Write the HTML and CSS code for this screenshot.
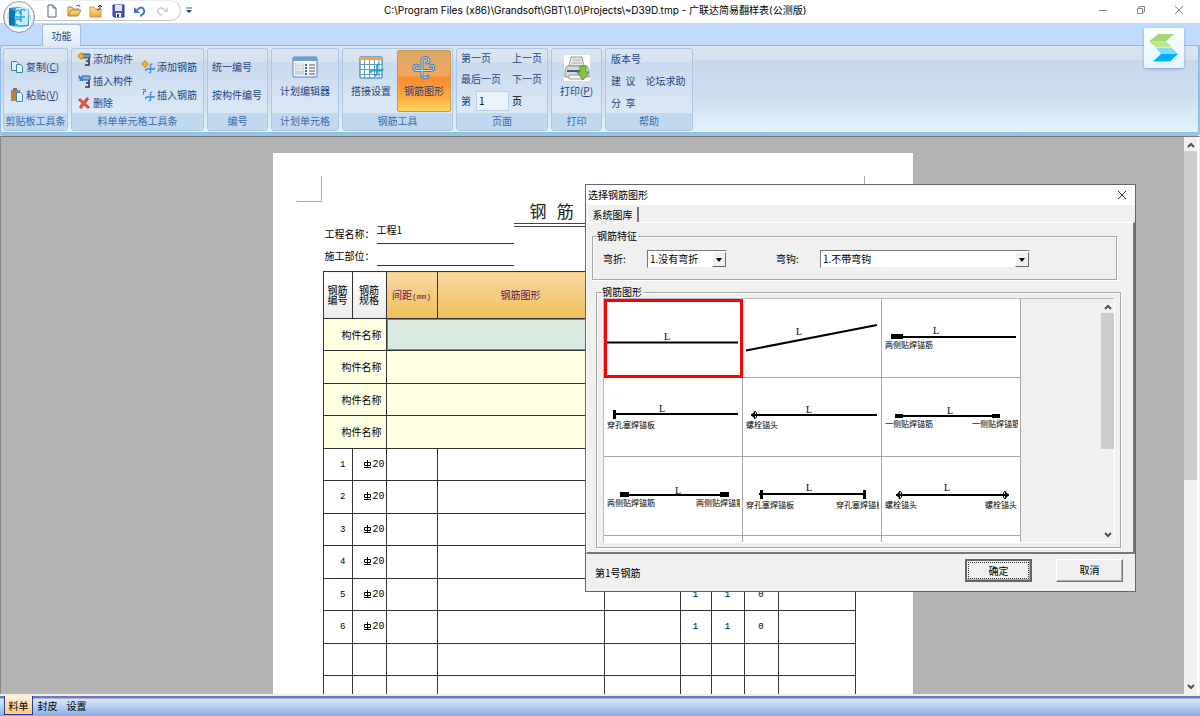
FILE: index.html
```html
<!DOCTYPE html>
<html lang="zh-CN">
<head>
<meta charset="utf-8">
<title>广联达简易翻样表(公测版)</title>
<link rel="stylesheet" href="styles.css">
</head>
<body>
<svg class="defs" width="0" height="0" aria-hidden="true">
  <defs>
    <linearGradient id="orb" x1="0" y1="0" x2="0" y2="1"><stop offset="0" stop-color="#fdfdfe"/><stop offset=".5" stop-color="#cdd6e2"/><stop offset="1" stop-color="#e9eff7"/></linearGradient>
    <linearGradient id="cyan" x1="0" y1="0" x2="1" y2="1"><stop offset="0" stop-color="#0b7fb8"/><stop offset=".5" stop-color="#7fe0f5"/><stop offset="1" stop-color="#1a8dc6"/></linearGradient>
    <linearGradient id="fold" x1="0" y1="0" x2="0" y2="1"><stop offset="0" stop-color="#fbe29a"/><stop offset="1" stop-color="#e3a93a"/></linearGradient>
    <symbol id="rebar" viewBox="0 0 24 24"><path d="M4 13H20a3 3 0 0 0 2-3M12 21V6a4 4 0 0 1 4-4M4 13a2 2 0 0 0-1 4M12 21h-4" fill="none" stroke="currentColor" stroke-width="3"/></symbol>
    <symbol id="steel" viewBox="0 0 8 8"><path d="M3.500 0v8M.5 2.500h6v3h-6zM0 7.500h7" fill="none" stroke="#000"/></symbol>
    <symbol id="plus" viewBox="0 0 8 8"><path d="M3 1h2v2h2v2H5v2H3V5H1V3h2z" fill="#ffc21c" stroke="#d98a10"/></symbol>
    <symbol id="up" viewBox="0 0 8 6"><path d="M1 5l3-3 3 3" fill="none" stroke="#505050" stroke-width="2"/></symbol>
    <symbol id="down" viewBox="0 0 8 6"><path d="M1 1l3 3 3-3" fill="none" stroke="#505050" stroke-width="2"/></symbol>
    <symbol id="bolt" viewBox="0 0 6 8"><path d="M0 4l3-3v6z"/><path d="M3.500 0v8M3 .5h1.500l1 1.500v4l-1 1.500H3" fill="none" stroke="#000"/></symbol>
  </defs>
</svg>

<header class="titlebar">
  <button class="orb" aria-label="应用程序菜单">
    <svg width="34" height="34" viewBox="0 0 34 34"><circle cx="17" cy="17" r="15.500" fill="url(#orb)" stroke="#8e9bab"/><circle cx="17" cy="17" r="13" fill="none" stroke="#fff" stroke-width="2"/><path d="M7 8l9-1 11 2v17l-9 1-11-1z" fill="url(#cyan)"/><path d="M14 8h9l3 3v14H13z" fill="#e7fbff" opacity=".75"/><path d="M7 9l6 2v15l-6-1z" fill="#0878b0"/><path d="M14 13a2 2 0 1 1 3 1M19 22V12a2 2 0 0 1 4-1M12 17h11M16 25a3 3 0 1 1 3-3" fill="none" stroke="#2aa9de" stroke-width="1.500"/></svg>
  </button>
  <div class="quick">
    <button aria-label="新建"><svg width="14" height="14" viewBox="0 0 14 14"><path d="M3 1h5l3 3v9H3z" fill="#fff" stroke="#51648c"/><path d="M8 1v3h3" fill="#ccd8ee" stroke="#51648c"/></svg></button>
    <button aria-label="打开"><svg width="14" height="14" viewBox="0 0 14 14"><path d="M1 12V3h4l1 2h6v2" fill="#f7d98a" stroke="#b8862f"/><path d="M1 12l3-6h10l-3 6z" fill="url(#fold)" stroke="#b8862f"/><path d="M9 2l3-1 1 2" fill="none" stroke="#3c65b4"/></svg></button>
    <button aria-label="关闭"><svg width="14" height="14" viewBox="0 0 14 14"><path d="M1 13V3h4l1 2h6v8z" fill="url(#fold)" stroke="#c79a45"/><path d="M8 6q4 0 3-4M9 3l2-2 2 2" fill="none" stroke="#333"/></svg></button>
    <button aria-label="保存"><svg width="14" height="14" viewBox="0 0 14 14"><path d="M2 1h11v12H3l-1-1z" fill="#4b55c4" stroke="#2d348c"/><path d="M4 1h7v6H4z" fill="#dfe6fb"/><path d="M5 9h5v4H5z" fill="#fff"/><path d="M6 10h2v3H6z" fill="#2d348c"/></svg></button>
    <button aria-label="撤销"><svg width="14" height="14" viewBox="0 0 14 14"><path d="M4 6q5-5 7 0 1 4-4 6" fill="none" stroke="#3d74cf" stroke-width="2"/><path d="M1 3v6h6z" fill="#3d74cf"/></svg></button>
    <button aria-label="恢复"><svg width="14" height="14" viewBox="0 0 14 14"><path d="M10 6q-5-4-7 0-1 4 4 5" fill="none" stroke="#d3d5d8" stroke-width="2"/><path d="M13 3v5H8z" fill="#d3d5d8"/></svg></button>
  </div>
  <button class="more" aria-label="自定义快速访问工具栏"><svg width="6" height="8" viewBox="0 0 6 8"><path d="M0 1h6" stroke="#3a5a92"/><path d="M0 3h6L3 6z" fill="#1f3f78"/></svg></button>
  <h1 class="caption">C:\Program Files (x86)\Grandsoft\GBT\1.0\Projects\~D39D.tmp - 广联达简易翻样表(公测版)</h1>
  <div class="winctl">
    <button aria-label="最小化"><svg width="10" height="10" viewBox="0 0 10 10"><path d="M1 5.500h8" stroke="#888"/></svg></button>
    <button aria-label="还原"><svg width="10" height="10" viewBox="0 0 10 10"><path d="M1.500 3.500h5v5h-5zM3 3V1.500h5.500V7H7" fill="none" stroke="#888"/></svg></button>
    <button aria-label="关闭窗口"><svg width="10" height="10" viewBox="0 0 10 10"><path d="M1 1l8 8M9 1L1 9" stroke="#888"/></svg></button>
  </div>
</header>

<nav class="tabs">
  <button class="tab">功能</button>
  <a class="brand" href="#" aria-label="官网"><svg width="30" height="28" viewBox="0 0 30 28"><path d="M9 0h16l-8 7.500H0z" fill="#a4d873"/><path d="M0 7.500h17l6 6H7z" fill="#bde88b"/><path d="M7 14h16l6 6H12z" fill="#7fdcff"/><path d="M12 20h17l-8 7.500H4z" fill="#00b0fb"/></svg></a>
</nav>

<section class="ribbon">
  <div class="group g1">
    <div class="body stack two">
      <button><svg width="14" height="14" viewBox="0 0 14 14"><path d="M1.500 1.500h5l2 2v7h-7z" fill="#d6f0fa" stroke="#2d86b4"/><path d="M6.500 4.500h4l2 2v6h-6z" fill="#f2fbff" stroke="#2d86b4"/></svg><span>复制(<u>C</u>)</span></button>
      <button><svg width="14" height="14" viewBox="0 0 14 14"><path d="M1 2h9v11H1z" fill="#b98344"/><path d="M3 0h4v3H3z" fill="#777"/><path d="M6.500 4.500h4l2 2v7h-6z" fill="#e3f6ff" stroke="#2d86b4"/></svg><span>粘贴(<u>V</u>)</span></button>
    </div>
    <h2>剪贴板工具条</h2>
  </div>
  <div class="group g2">
    <div class="body">
      <div class="stack three">
        <button><svg width="14" height="14" viewBox="0 0 14 14"><path d="M5 2h8v4H5z" fill="#6f97c8" stroke="#2d5a96"/><path d="M12 6v7H8M12 9H9" fill="none" stroke="#333" stroke-width="1.500"/><use href="#plus" width="8" height="8"/></svg><span>添加构件</span></button>
        <button><svg width="14" height="14" viewBox="0 0 14 14"><path d="M5 2h8v4H5z" fill="#8db6da" stroke="#2d5a96"/><path d="M12 6v7H8M12 9H9" fill="none" stroke="#333" stroke-width="1.500"/><path d="M2 1l3 3 1-2v5H2l1-1-2-3z" fill="#2f8bd0"/></svg><span>插入构件</span></button>
        <button><svg width="14" height="14" viewBox="0 0 14 14"><path d="M2 3l10 9M11 2L3 12" stroke="#d8452c" stroke-width="3"/><path d="M3 4l8 7M10 3L4 11" stroke="#f8694e"/></svg><span>删除</span></button>
      </div>
      <div class="stack two">
        <button class="blue"><svg width="14" height="14" viewBox="0 0 14 14"><use href="#rebar" x="4" y="3" width="11" height="11"/><use href="#plus" x="0" y="0" width="8" height="8"/></svg><span>添加钢筋</span></button>
        <button class="blue"><svg width="14" height="14" viewBox="0 0 14 14"><use href="#rebar" x="4" y="3" width="11" height="11"/><path d="M1.500 1.500h3v2h-2v3" fill="none" stroke="#3f79c8"/></svg><span>插入钢筋</span></button>
      </div>
    </div>
    <h2>料单单元格工具条</h2>
  </div>
  <div class="group g3">
    <div class="body stack two"><button>统一编号</button><button>按构件编号</button></div>
    <h2>编号</h2>
  </div>
  <div class="group g4">
    <div class="body big">
      <button><svg width="26" height="26" viewBox="0 0 26 26"><rect x="1" y="2" width="24" height="20" rx="1" fill="#f8f8fa" stroke="#5b83b5"/><path d="M1 2h24v4H1z" fill="#6ba0d6"/><path d="M3 8h9v12H3z" fill="#cdd4df"/><path d="M4 9h7M4 12h7M4 15h7" stroke="#fff"/><path d="M13 10h2M13 13h2M13 16h2M13 19h2" stroke="#2f66ae" stroke-width="2"/><path d="M17 10h6M17 13h6M17 16h6M17 19h6" stroke="#556"/></svg><span>计划编辑器</span></button>
    </div>
    <h2>计划单元格</h2>
  </div>
  <div class="group g5">
    <div class="body big tools">
      <button><svg width="26" height="26" viewBox="0 0 26 26"><path d="M2 2h22v21H2z" fill="#fff" stroke="#2b6e9e"/><path d="M2 2h22v3H2z" fill="#f2a62c"/><path d="M2 9.500h22M2 14.500h22M2 19.500h22M6.500 5v18M11.500 5v18M16.500 5v18M21 5v18" stroke="#5f9cc8"/><g color="#1ba3cf"><use href="#rebar" x="12" y="8" width="14" height="14"/></g></svg><span>搭接设置</span></button>
      <button class="on"><svg width="26" height="26" viewBox="0 0 26 26"><g fill="none" stroke-linecap="round"><path d="M11 18V6a3.500 3.500 0 0 1 7 0q0 2-2 2M3 11.500a3 3 0 0 0 2 4h15a3 3 0 0 0 2-5q-2-1-2 1M11 18a3 3 0 0 0 6 3M7 11q-3-2-4 .5" stroke="#3f7fc4" stroke-width="3"/><path d="M11 18V6a3.500 3.500 0 0 1 7 0q0 2-2 2M3 11.500a3 3 0 0 0 2 4h15a3 3 0 0 0 2-5q-2-1-2 1M11 18a3 3 0 0 0 6 3M7 11q-3-2-4 .5" stroke="#c5e3fb"/></g></svg><span>钢筋图形</span></button>
    </div>
    <h2>钢筋工具</h2>
  </div>
  <div class="group g6">
    <div class="body pager">
      <button>第一页</button><button>上一页</button>
      <button>最后一页</button><button>下一页</button>
      <label for="pageno">第</label><div class="pagebox"><input id="pageno" type="text" value="1"><span>页</span></div>
    </div>
    <h2>页面</h2>
  </div>
  <div class="group g7">
    <div class="body big">
      <button><svg width="26" height="26" viewBox="0 0 26 26"><path d="M0 0h26v26H0z" fill="#fff"/><path d="M7 2h11l2 9H5z" fill="#e8e8e8" stroke="#999"/><path d="M9 5h8M8 8h10" stroke="#aaa"/><path d="M3 11h20l2 4v7H1v-7z" fill="#d5d8dc" stroke="#8d9298"/><path d="M3 15h19v2H3z" fill="#3d5c8c"/><path d="M5 20h14v4H5z" fill="#f4f4f4" stroke="#999"/><path d="M16 11h6v6h3l-6 8-6-8h3z" fill="#86c440" stroke="#5d9a27"/></svg><span>打印(<u>P</u>)</span></button>
    </div>
    <h2>打印</h2>
  </div>
  <div class="group g8">
    <div class="body stack three links">
      <button>版本号</button>
      <div class="pair"><button>建&nbsp; 议</button><button>论坛求助</button></div>
      <button>分&nbsp; 享</button>
    </div>
    <h2>帮助</h2>
  </div>
</section>

<main class="work">
  <div class="canvas">
    <article class="sheet">
      <div class="marks"><i></i><i class="r"></i></div>
      <h2 class="doctitle"><span>钢 筋 配 料 单</span></h2>
      <dl class="meta"><dt>工程名称：</dt><dd>工程1</dd><dt>施工部位：</dt><dd></dd></dl>
      <table>
        <colgroup><col class="c1"><col class="c2"><col class="c3"><col class="c4"><col class="c5"><col class="c6"><col class="c7"><col class="c8"><col class="c9"></colgroup>
        <thead><tr><th>钢筋<br>编号</th><th>钢筋<br>规格</th><th class="hot">间距<span class="unit">(mm)</span></th><th class="hot">钢筋图形</th><th class="hot"></th><th></th><th></th><th></th><th></th></tr></thead>
        <tbody>
          <tr class="name"><td colspan="2">构件名称</td><td colspan="7" class="sel"></td></tr>
          <tr class="name"><td colspan="2">构件名称</td><td colspan="7"></td></tr>
          <tr class="name"><td colspan="2">构件名称</td><td colspan="7"></td></tr>
          <tr class="name"><td colspan="2">构件名称</td><td colspan="7"></td></tr>
          <tr><td>1</td><td><svg width="8" height="8"><use href="#steel"/></svg>20</td><td></td><td></td><td></td><td>1</td><td>1</td><td>0</td><td></td></tr>
          <tr><td>2</td><td><svg width="8" height="8"><use href="#steel"/></svg>20</td><td></td><td></td><td></td><td>1</td><td>1</td><td>0</td><td></td></tr>
          <tr><td>3</td><td><svg width="8" height="8"><use href="#steel"/></svg>20</td><td></td><td></td><td></td><td>1</td><td>1</td><td>0</td><td></td></tr>
          <tr><td>4</td><td><svg width="8" height="8"><use href="#steel"/></svg>20</td><td></td><td></td><td></td><td>1</td><td>1</td><td>0</td><td></td></tr>
          <tr><td>5</td><td><svg width="8" height="8"><use href="#steel"/></svg>20</td><td></td><td></td><td></td><td>1</td><td>1</td><td>0</td><td></td></tr>
          <tr><td>6</td><td><svg width="8" height="8"><use href="#steel"/></svg>20</td><td></td><td></td><td></td><td>1</td><td>1</td><td>0</td><td></td></tr>
          <tr><td></td><td></td><td></td><td></td><td></td><td></td><td></td><td></td><td></td></tr>
          <tr><td></td><td></td><td></td><td></td><td></td><td></td><td></td><td></td><td></td></tr>
        </tbody>
      </table>
    </article>
  </div>
  <div class="scroll"><svg width="8" height="6"><use href="#up"/></svg><div class="track"><div class="thumb"></div></div><svg width="8" height="6"><use href="#down"/></svg></div>
</main>

<footer class="sheets"><button class="cur">料单</button><button>封皮</button><button>设置</button></footer>

<section class="dialog" role="dialog" aria-labelledby="dlgtitle">
  <div class="dlghead"><h2 id="dlgtitle">选择钢筋图形</h2><button aria-label="关闭对话框"><svg width="10" height="10" viewBox="0 0 10 10"><path d="M1 1l8 8M9 1L1 9" stroke="#333"/></svg></button></div>
  <div class="dlgtabs"><button>系统图库</button></div>
  <div class="dlgpage">
    <fieldset class="feature">
      <legend>钢筋特征</legend>
      <label for="bend">弯折:</label>
      <div class="combo short"><select id="bend"><option>1.没有弯折</option></select><span class="drop"></span></div>
      <label for="hook">弯钩:</label>
      <div class="combo long"><select id="hook"><option>1.不带弯钩</option></select><span class="drop"></span></div>
    </fieldset>
    <fieldset class="shapes">
      <legend>钢筋图形</legend>
      <div class="view">
        <div class="cells">
          <button class="picked"><svg viewBox="0 0 138 78"><path d="M2 43.500h132"/><text class="l" x="60" y="41">L</text></svg></button>
          <button><svg viewBox="0 0 138 78"><path d="M3 51.500L134 26"/><text class="l" x="53" y="36">L</text></svg></button>
          <button><svg viewBox="0 0 138 78"><rect x="9" y="35" width="12" height="5"/><path d="M9 38h125"/><text class="l" x="51" y="35">L</text><text x="3" y="49">两侧贴焊锚筋</text></svg></button>
          <button><svg viewBox="0 0 138 78"><path d="M9 36h125"/><rect x="9" y="32" width="3" height="9"/><text class="l" x="55" y="34">L</text><text x="3" y="50">穿孔塞焊锚板</text></svg></button>
          <button><svg viewBox="0 0 138 78"><path d="M8 37h126"/><use href="#bolt" x="8" y="33" width="6" height="8"/><text class="l" x="63" y="35">L</text><text x="3" y="50">螺栓锚头</text></svg></button>
          <button><svg viewBox="0 0 136 78"><path d="M13 38h105"/><rect x="13" y="36" width="8" height="4"/><rect x="110" y="36" width="8" height="4"/><text class="l" x="65" y="36">L</text><text x="3" y="49">一侧贴焊锚筋</text><text x="90" y="49">一侧贴焊锚筋</text></svg></button>
          <button><svg viewBox="0 0 136 78"><path d="M16 38h109"/><rect x="16" y="35" width="9" height="5"/><rect x="116" y="35" width="9" height="5"/><text class="l" x="71" y="37">L</text><text x="3" y="49">两侧贴焊锚筋</text><text x="92" y="49">两侧贴焊锚筋</text></svg></button>
          <button><svg viewBox="0 0 136 78"><path d="M16 37h107"/><rect x="17" y="33" width="3" height="9"/><rect x="120" y="33" width="3" height="9"/><text class="l" x="63" y="34">L</text><text x="3" y="51">穿孔塞焊锚板</text><text x="93" y="51">穿孔塞焊锚板</text></svg></button>
          <button><svg viewBox="0 0 136 78"><path d="M14 38h113"/><use href="#bolt" x="14" y="34" width="6" height="8"/><use href="#bolt" width="6" height="8" transform="translate(127 34) scale(-1 1)"/><text class="l" x="62" y="34">L</text><text x="3" y="51">螺栓锚头</text><text x="103" y="51">螺栓锚头</text></svg></button>
          <div></div><div></div><div></div>
        </div>
        <div class="scroll inner"><svg width="8" height="6"><use href="#up"/></svg><div class="track"><div class="thumb"></div></div><svg width="8" height="6"><use href="#down"/></svg></div>
      </div>
    </fieldset>
  </div>
  <div class="dlgfoot"><p>第1号钢筋</p><button class="ok"><span>确定</span></button><button>取消</button></div>
</section>
</body>
</html>
```

FILE: styles.css
```css
* { box-sizing: border-box; }
html, body { height: 100%; }
body {
  margin: 0;
  display: flex;
  flex-direction: column;
  overflow: hidden;
  position: relative;
  font: 10px/12px "Noto Sans CJK SC", sans-serif;
  color: #000;
  background: #fff;
}
button, input, select {
  font: inherit;
  color: inherit;
  margin: 0;
  padding: 0;
  border: 0;
  background: none;
  white-space: nowrap;
}
h1, h2, p, dl, dd { margin: 0; font-size: 10px; font-weight: 400; }
svg { display: block; flex: none; }
.defs { position: absolute; }

/* title bar */
.titlebar { flex: none; display: flex; align-items: flex-start; height: 23px; position: relative; }
.orb { position: absolute; left: 2px; top: 0; z-index: 3; }
.quick {
  display: flex;
  align-items: center;
  gap: 8px;
  height: 21px;
  margin-left: 32px;
  padding: 0 11px 0 13px;
  border: 1px solid #c8c8c8;
  border-top-color: #eee;
  border-left: 0;
  border-radius: 0 11px 11px 0;
}
.more { margin: 7px 0 0 5px; }
.caption {
  flex: 1;
  padding: 4px 0 0 192px;
  font-family: Inter, "Noto Sans CJK SC", sans-serif;
  white-space: nowrap;
}
.winctl { display: flex; gap: 28px; padding: 5px 16px 0 0; }

/* ribbon */
.tabs {
  flex: none;
  display: flex;
  justify-content: space-between;
  height: 22px;
  padding: 1px 8px 0 42px;
  background: #bfdbff;
  position: relative;
}
.tab {
  width: 39px;
  height: 22px;
  color: #15428b;
  background: linear-gradient(#f6faff, #dfe9f5);
  border: 1px solid #9cbfe9;
  border-bottom: 0;
  border-radius: 3px 3px 0 0;
  z-index: 1;
}
.brand {
  position: absolute;
  right: 16px;
  top: 5px;
  z-index: 2;
  display: grid;
  place-items: center;
  width: 40px;
  height: 40px;
  background: linear-gradient(#fff, #e2f6fd);
  border-radius: 2px;
  box-shadow: 0 1px 3px #7f9dbf;
}
.ribbon {
  flex: none;
  display: flex;
  gap: 3px;
  height: 88px;
  margin-right: 1px;
  padding: 2px 2px 1px;
  border: 1px solid #8db8ea;
  border-bottom-color: #8cc3cf;
  border-radius: 3px;
  background: linear-gradient(#dbe5f2 0, #d6e1f0 16%, #c7d8ed 17%, #cfdff0 60%, #e2f3fd 100%);
  box-shadow: 0 0 0 3px #9fbfe8;
}
.group {
  display: flex;
  flex-direction: column;
  border: 1px solid #abc6e6;
  border-radius: 3px;
  background: linear-gradient(#dde7f3 0, #d7e2f0 16%, #c9daee 17%, #dbe9f7 78%);
  color: #1f4384;
  overflow: hidden;
}
.group h2 {
  flex: none;
  height: 17px;
  line-height: 16px;
  text-align: center;
  color: #3e6aaa;
  background: #c1d8f1;
  white-space: nowrap;
}
.g1 { width: 65px; }
.g2 { width: 133px; }
.g3 { width: 61px; }
.g4 { width: 68px; }
.g5 { width: 111px; }
.g6 { width: 92px; }
.g7 { width: 51px; }
.g8 { width: 88px; }
.body { flex: 1; display: flex; }
.body button { color: inherit; display: flex; align-items: center; gap: 2px; }
.stack { display: flex; flex-direction: column; justify-content: center; }
.stack.two { gap: 16px; padding-left: 4px; }
.stack.three { gap: 10px; padding-left: 5px; }
.stack.two button, .stack.three button { height: 12px; }
.g1 .stack { padding-left: 6px; }
.g2 .stack.two { padding-left: 8px; }
.blue svg { color: #3f8ad8; }
.pair { display: flex; gap: 10px; }
.big { justify-content: center; padding: 1px 0; }
.body.big button { flex-direction: column; gap: 4px; padding: 5px 6px; }
.body.tools { justify-content: flex-start; padding-left: 2px; }
.body.big .on {
  width: 54px;
  border: 1px solid #c7984a;
  border-radius: 2px;
  padding: 4px 5px;
  background: linear-gradient(#dba667 0, #f4a65c 40%, #f98b32 45%, #fda83c 75%, #ffd75a 100%);
}
.pager {
  display: grid;
  grid-template-columns: 51px 1fr;
  align-content: center;
  row-gap: 8px;
  padding-left: 4px;
}
.pager button { height: 13px; }
.pager label { grid-column: 1; line-height: 20px; }
.pagebox { display: flex; align-items: center; gap: 3px; margin-left: -36px; color: #000; }
.pagebox input {
  width: 33px;
  height: 20px;
  padding-left: 2px;
  background: #eaf3fe;
  border: 1px solid #bccfe8;
}
.pager label, .pagebox { margin-top: -3px; }

/* work area */
.work {
  flex: 1;
  min-height: 0;
  display: flex;
  margin-top: 3px;
  padding-right: 2px;
  border-top: 1px solid #777;
  border-left: 1px solid #888;
  border-right: 1px solid #eee;
  z-index: 1;
}
.canvas { flex: 1; display: flex; justify-content: center; padding-top: 16px; background: #b3b3b3; overflow: hidden; }
.sheet { width: 640px; padding: 23px 24px 0; background: #fff; }
.marks { display: flex; justify-content: space-between; height: 26px; }
.marks i { width: 25px; height: 26px; border: solid #aaa; border-width: 0 1px 1px 0; }
.marks .r { border-width: 0 0 1px 1px; }
.doctitle { display: flex; justify-content: center; }
.doctitle span {
  width: 157px;
  height: 25px;
  font-family: "Liberation Mono", "Noto Sans CJK SC", monospace;
  font-size: 17px;
  line-height: 24px;
  text-align: center;
  white-space: nowrap;
  color: #222;
  border-bottom: 4px double #444;
}
.meta { display: grid; grid-template-columns: 52px 137px; margin-top: -3px; padding-left: 28px; row-gap: 2px; }
.meta dt { line-height: 19px; white-space: nowrap; }
.meta dd { height: 20px; line-height: 12px; border-bottom: 1px solid #333; }
.sheet table {
  table-layout: fixed;
  width: 533px;
  margin: 5px 0 0 26px;
  border-collapse: collapse;
  font-size: 10px;
}
.c1 { width: 29px; }
.c2 { width: 34px; }
.c3 { width: 51px; }
.c4 { width: 167px; }
.c5 { width: 76px; }
.c6 { width: 31px; }
.c7 { width: 33px; }
.c8 { width: 34px; }
.c9 { width: 77px; }
th, td { border: 1px solid #333; padding: 0; font-weight: 400; }
th { height: 47px; line-height: 10px; background: linear-gradient(#fff, #ececec); }
th.hot { color: #6a1050; background: linear-gradient(#f8d9a2, #efbf5c); }
.unit { font: 8px "Liberation Mono", monospace; }
td { height: 33px; text-align: center; font-family: "Liberation Mono", monospace; font-size: 9px; }
tr:nth-child(odd) td { height: 32px; }
td:first-child { text-align: right; padding-right: 6px; }
td:nth-child(2) { text-align: right; padding-right: 1px; font-size: 10px; }
td svg { display: inline-block; vertical-align: -1px; }
.name td { background: #ffffe1; font-family: "Noto Sans CJK SC", sans-serif; font-size: 10px; }
.name td:first-child { padding-right: 4px; }
.name td.sel { background: #d8e9e0; box-shadow: inset 0 0 0 1px #888; }

.scroll { flex: none; width: 13px; display: flex; flex-direction: column; align-items: center; padding: 5px 0 4px; background: #f0f0f0; }
.scroll .track { flex: 1; align-self: stretch; padding: 3px 0; }
.scroll .thumb { height: 62%; background: #cdcdcd; }

/* sheet tabs */
.sheets {
  flex: none;
  display: flex;
  height: 22px;
  padding-left: 4px;
  border-top: 2px solid #f6ecd9;
  background: linear-gradient(#6f78c4 0, #6f78c4 2px, #dbe9fa 3px, #88ade3 100%);
}
.sheets button { width: 29px; height: 19px; padding-top: 1px; }
.sheets .cur { background: linear-gradient(#fff2d8, #fcca84); border: 1px solid #2d3a94; border-top: 0; }

/* dialog */
.dialog {
  position: absolute;
  left: 585px;
  top: 184px;
  z-index: 5;
  width: 551px;
  display: flex;
  flex-direction: column;
  border: 1px solid #666;
  background: #f0f0f0;
}
.dlghead { display: flex; justify-content: space-between; align-items: center; height: 20px; padding: 0 8px 0 2px; background: #fff; }
.dlgtabs { display: flex; height: 17px; padding: 2px 0 0 1px; }
.dlgtabs button { width: 52px; height: 15px; border-right: 2px solid #777; border-left: 1px solid #fff; }
.dlgpage { padding: 7px 12px 4px 5px; border: solid; border-width: 1px 2px 2px 1px; border-color: #fff #777 #777 #fff; }
fieldset {
  position: relative;
  min-width: 0;
  margin: 0;
  padding: 0;
  border: 1px solid #a8a8a8;
  box-shadow: 1px 1px 0 #fff, inset 1px 1px 0 #fff;
}
legend { padding: 0 1px; line-height: 12px; }
.feature { display: flex; align-items: center; height: 50px; margin-right: 4px; padding: 0 0 4px 10px; }
.feature legend { margin-left: -7px; }
.feature label { width: 44px; }
.combo { position: relative; height: 18px; background: #fff; border: 1px solid #777; border-right-color: #eee; border-bottom-color: #eee; }
.combo select { appearance: none; width: 100%; height: 16px; padding: 0 16px 0 2px; border: 0; }
.combo.short { width: 80px; margin-right: 49px; }
.combo.long { width: 210px; }
.drop { position: absolute; right: 0; top: 1px; width: 14px; height: 15px; pointer-events: none; background: #f0f0f0; border: 1px solid; border-color: #fff #666 #666 #fff; }
.drop::after { content: ""; position: absolute; left: 3px; top: 5px; border: 3px solid transparent; border-top: 4px solid #000; border-bottom: 0; }
.shapes { margin: 6px 0 0 4px; padding: 0 5px 4px 6px; }
.shapes legend { margin-left: -2px; }
.view { display: flex; justify-content: space-between; height: 245px; border: 1px solid #c8c8c8; border-color: #bbb #fff #fff #bbb; overflow: hidden; }
.cells { display: grid; grid-template-columns: repeat(3, 139px); grid-auto-rows: 79px; }
.cells > * { background: #fff; border: solid #a8a8a8; border-width: 0 1px 1px 0; }
.cells .picked { outline: 3px solid #f00; outline-offset: -3px; }
.cells svg { height: 78px; width: auto; }
.cells path { stroke: #000; stroke-width: 2px; }
.cells text { font-size: 8px; }
.cells text.l { font: 10px "Liberation Serif", serif; }
.inner .thumb { height: 63%; }
.dlgfoot { display: flex; align-items: center; height: 37px; padding: 0 12px 5px 9px; }
.dlgfoot p { flex: 1; padding-top: 6px; }
.dlgfoot button { width: 67px; height: 23px; margin-left: 24px; border: 1px solid; border-color: #fff #777 #777 #fff; box-shadow: inset -1px -1px 0 #b0b0b0; }
.dlgfoot .ok { border: 2px solid #666; padding: 1px; }
.dlgfoot .ok span { display: block; height: 17px; line-height: 15px; border: 1px dotted #333; }
```
